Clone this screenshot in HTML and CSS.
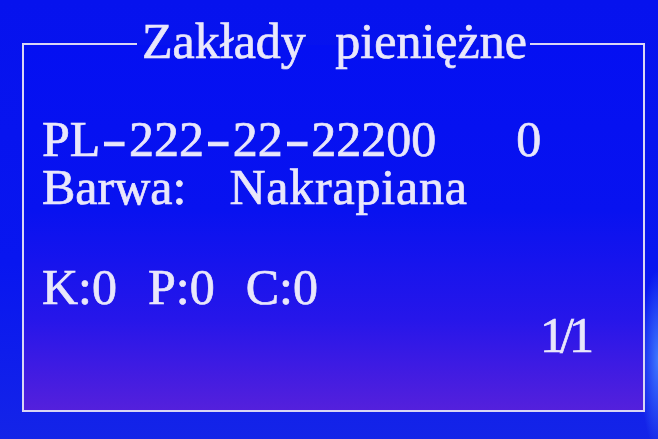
FILE: index.html
```html
<!DOCTYPE html>
<html lang="pl">
<head>
<meta charset="utf-8">
<title>Zakłady pieniężne</title>
<link rel="stylesheet" href="styles.css">
</head>
<body>
<div class="screen">
  <fieldset class="frame">
    <legend class="title">Zakłady pieniężne</legend>
    <div class="row row-id">
      <span>PL<span class="dash">-</span>222<span class="dash">-</span>22<span class="dash">-</span>22200</span>
      <span>0</span>
    </div>
    <div class="row row-color">
      <span>Barwa:</span>
      <span class="wide">Nakrapiana</span>
    </div>
    <div class="row row-counts">
      <span>K:0</span>
      <span>P:0</span>
      <span>C:0</span>
    </div>
    <div class="row row-page">
      <span>1/1</span>
    </div>
  </fieldset>
</div>
</body>
</html>
```
FILE: styles.css
```css
html, body {
  margin: 0;
  padding: 0;
  width: 658px;
  height: 439px;
  overflow: hidden;
}

body {
  background:
    radial-gradient(ellipse 18px 90px at 658px 360px, #3f78ff 0%, rgba(63,120,255,0) 100%),
    linear-gradient(180deg, #0612ee 0%, #0816f0 60%, #1424e8 100%);
  font-family: "Liberation Serif", "Times New Roman", serif;
  color: #e9e7fb;
}

.screen {
  padding: 16px 0 0 22px;
}

.frame {
  box-sizing: border-box;
  width: 623px;
  height: 396px;
  margin: 0;
  padding: 43px 54px 0 18px;
  border: 2px solid #d9d6f4;
  background: linear-gradient(180deg, #0410f2 0%, #0812f0 45%, #2616ea 75%, #5420dc 100%);
}

.title {
  margin-left: 95px;
  padding: 0 3px 6px 5px;
  font-size: 50px;
  line-height: 50px;
  word-spacing: 17px;
  color: #e9e7fb;
  -webkit-text-stroke: 0.7px #e9e7fb;
}

.row {
  display: flex;
  font-size: 50px;
  line-height: 48px;
  white-space: pre;
  -webkit-text-stroke: 0.7px #e9e7fb;
}

.dash {
  display: inline-block;
  padding: 0 6px;
  transform: scaleX(1.5);
}

.row-id {
  gap: 80px;
}

.row-color {
  gap: 43px;
}

.wide {
  letter-spacing: 0.8px;
}

.row-counts {
  margin-top: 52px;
  gap: 31px;
}

.row-page {
  justify-content: flex-end;
  letter-spacing: -5px;
}
```
